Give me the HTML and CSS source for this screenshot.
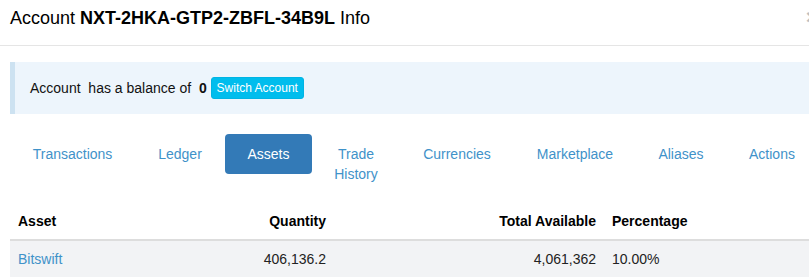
FILE: index.html
```html
<!DOCTYPE html>
<html lang="en">
<head>
  <meta charset="UTF-8" />
  <title>Account Info</title>
  <link rel="stylesheet" href="styles.css">
</head>
<body>

<div class="modal">
  <div class="modal-header">
    <h4 class="modal-title">Account <strong>NXT-2HKA-GTP2-ZBFL-34B9L</strong> Info</h4>
    <button class="close" type="button">&times;</button>
  </div>

  <div class="modal-body">
    <div class="callout">
      Account &nbsp;has a balance of &nbsp;<strong>0</strong>
      <button class="btn-switch" type="button">Switch Account</button>
    </div>

    <ul class="nav-pills">
      <li><a href="#">Transactions</a></li>
      <li><a href="#">Ledger</a></li>
      <li class="active"><a href="#">Assets</a></li>
      <li><a href="#">Trade History</a></li>
      <li><a href="#">Currencies</a></li>
      <li><a href="#">Marketplace</a></li>
      <li><a href="#">Aliases</a></li>
      <li><a href="#">Actions</a></li>
    </ul>

    <table class="assets">
      <colgroup>
        <col class="col-asset">
        <col class="col-qty">
        <col class="col-total">
        <col class="col-pct">
      </colgroup>
      <thead>
        <tr>
          <th>Asset</th>
          <th class="num">Quantity</th>
          <th class="num">Total Available</th>
          <th>Percentage</th>
        </tr>
      </thead>
      <tbody>
        <tr>
          <td><a href="#">Bitswift</a></td>
          <td class="num">406,136.2</td>
          <td class="num">4,061,362</td>
          <td>10.00%</td>
        </tr>
      </tbody>
    </table>
  </div>
</div>

</body>
</html>
```

FILE: styles.css
```css
html {
  overflow: hidden;
}

body {
  margin: 0;
  padding: 0;
  background: #fff;
  color: #111;
  font-family: "Liberation Sans", Arial, sans-serif;
  font-size: 14px;
  line-height: 20px;
}

a {
  color: #3f92c9;
  text-decoration: none;
}

.modal {
  width: 828px;
}

.modal-header {
  display: flex;
  justify-content: space-between;
  align-items: flex-start;
  padding: 6px 10px 14px;
  border-bottom: 1px solid #e5e5e5;
}

.modal-title {
  margin: 0;
  font-size: 18px;
  font-weight: normal;
  line-height: 25px;
  color: #000;
}

.close {
  border: 0;
  background: none;
  padding: 0;
  font-family: inherit;
  font-size: 21px;
  font-weight: bold;
  line-height: 21px;
  color: #000;
  opacity: 0.25;
}

.modal-body {
  padding: 16px 10px 0;
}

.callout {
  background: #edf5fc;
  border-left: 5px solid #cde2f1;
  padding: 15px;
  margin-bottom: 20px;
  line-height: 22px;
  color: #111;
}

.btn-switch {
  display: inline-block;
  padding: 1px 5px;
  border: 1px solid #00b4e4;
  border-radius: 3px;
  background: #00bded;
  color: #fff;
  font-family: inherit;
  font-size: 12px;
  line-height: 18px;
  vertical-align: top;
}

.nav-pills {
  list-style: none;
  margin: 0 0 9px;
  padding: 0;
  display: grid;
  grid-template-columns: 125px 90px 87px 88px 114px 122px 90px 92px;
  align-items: start;
  text-align: center;
}

.nav-pills a {
  display: block;
  padding: 10px 15px;
  border-radius: 4px;
}

.nav-pills .active a {
  background: #337ab7;
  color: #fff;
}

.assets {
  width: 808px;
  border-collapse: collapse;
  table-layout: fixed;
}

.col-asset { width: 162px; }
.col-qty { width: 162px; }
.col-total { width: 270px; }
.col-pct { width: 214px; }

.assets th,
.assets td {
  padding: 8px;
  text-align: left;
}

.assets th {
  font-weight: bold;
  color: #000;
  border-bottom: 2px solid #dddddd;
}

.assets tbody tr {
  background: #f2f3f5;
}

.assets td {
  color: #222;
}

.assets .num {
  text-align: right;
}
```
